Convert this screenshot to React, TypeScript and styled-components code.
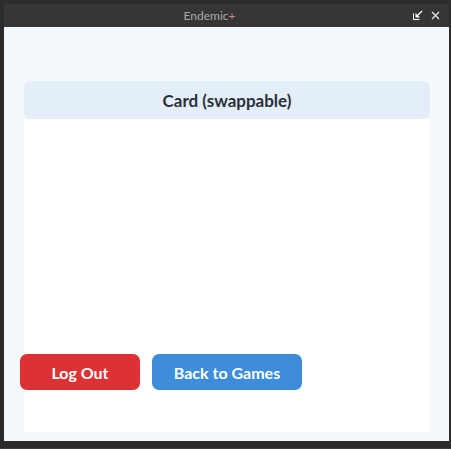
import React from "react";
import styled, { createGlobalStyle } from "styled-components";

const GlobalStyle = createGlobalStyle`
  html, body { margin: 0; padding: 0; background: #2c2c2c; }
  * { box-sizing: border-box; }
`;

const Frame = styled.div`
  width: 451px;
  height: 449px;
  display: flex;
  flex-direction: column;
  padding: 4px 2px 7px 4px;
  background: #2c2c2c;
  border-bottom: 1px solid #3c3c3c;
`;

const TitleBar = styled.div`
  height: 23px;
  background: #363636;
  display: flex;
  align-items: center;
  justify-content: center;
  padding-right: 34px;
  position: relative;
  font-family: "Source Sans Pro", "Lato", "Liberation Sans", sans-serif;
  font-size: 12px;
  color: #a9a9a9;
`;

const Plus = styled.span`
  color: #c98f94;
`;

const Controls = styled.div`
  position: absolute;
  right: 9px;
  top: 6px;
  display: flex;
  gap: 8px;
  align-items: center;
`;

const Content = styled.div`
  flex: 1;
  background: #f4f9fe;
  padding: 54px 19px 9px 20px;
  display: flex;
  flex-direction: column;
`;

const Card = styled.div`
  flex: 1;
  display: flex;
  flex-direction: column;
`;

const CardHeader = styled.div`
  height: 38px;
  border-radius: 7px;
  background: #e4eef9;
  display: flex;
  align-items: center;
  justify-content: center;
  font-family: "Source Sans Pro", "Lato", "Liberation Sans", sans-serif;
  font-weight: 700;
  font-size: 17px;
  color: #2b303b;
`;

const CardBody = styled.div`
  flex: 1;
  background: #ffffff;
  display: flex;
  flex-direction: column;
`;

const ButtonRow = styled.div`
  margin-top: auto;
  margin-bottom: 42px;
  margin-left: -4px;
  display: flex;
  gap: 12px;
`;

const Button = styled.button<{ $tone: "red" | "blue"; $w: number }>`
  width: ${(p) => p.$w}px;
  height: 36px;
  border: none;
  border-radius: 7px;
  background: ${(p) => (p.$tone === "red" ? "#dd3233" : "#3d8dda")};
  color: #ffffff;
  font-family: "Source Sans Pro", "Lato", "Liberation Sans", sans-serif;
  font-weight: 700;
  font-size: 16px;
  padding: 0;
  cursor: pointer;
`;

export default function App() {
  return (
    <>
      <GlobalStyle />
      <Frame>
        <TitleBar>
          <span>
            Endemic<Plus>+</Plus>
          </span>
          <Controls>
            <svg width="10" height="10" viewBox="0 0 10 10">
              <path d="M0.5 3.5 V9.5 H6.5" fill="none" stroke="#ffffff" strokeWidth="1" />
              <path d="M9 1 L3.5 6.5" stroke="#ffffff" strokeWidth="1.3" />
              <path d="M2.5 3 V7.5 H7 Z" fill="#ffffff" />
            </svg>
            <svg width="9" height="9" viewBox="0 0 9 9">
              <path d="M1 1 L8 8 M8 1 L1 8" stroke="#ece4ec" strokeWidth="1.3" />
            </svg>
          </Controls>
        </TitleBar>
        <Content>
          <Card>
            <CardHeader>Card (swappable)</CardHeader>
            <CardBody>
              <ButtonRow>
                <Button $tone="red" $w={120}>Log Out</Button>
                <Button $tone="blue" $w={150}>Back to Games</Button>
              </ButtonRow>
            </CardBody>
          </Card>
        </Content>
      </Frame>
    </>
  );
}
